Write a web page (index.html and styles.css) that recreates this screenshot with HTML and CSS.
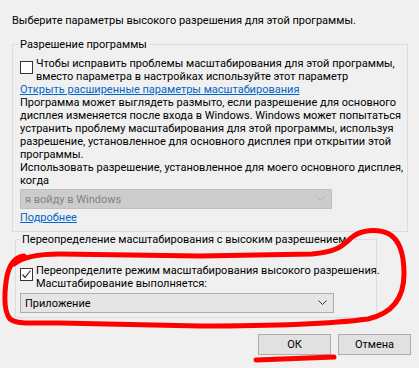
FILE: index.html
```html
<!DOCTYPE html>
<html lang="ru">
<head>
  <meta charset="UTF-8" />
  <meta name="viewport" content="width=device-width, initial-scale=1.0"/>
  <title>Параметры высокого разрешения</title>
  <link rel="stylesheet" href="styles.css">
</head>
<body>
  <div class="dialog">
    <p class="intro">Выберите параметры высокого разрешения для этой программы.</p>

    <fieldset class="group group-app">
      <legend>Разрешение программы</legend>
      <label class="check-row">
        <span class="check"></span>
        <span class="check-text">Чтобы исправить проблемы масштабирования для этой программы,<br>вместо параметра в настройках используйте этот параметр</span>
      </label>
      <a class="link" href="#">Открыть расширенные параметры масштабирования</a>
      <p class="text">Программа может выглядеть размыто, если разрешение для основного<br>дисплея изменяется после входа в Windows. Windows может попытаться<br>устранить проблему масштабирования для этой программы, используя<br>разрешение, установленное для основного дисплея при открытии этой<br>программы.</p>
      <p class="text">Использовать разрешение, установленное для моего основного дисплея,<br>когда</p>
      <div class="combo combo-disabled">
        <span>я войду в Windows</span>
        <svg class="chevron" width="9" height="6" viewBox="0 0 9 6"><polyline points="0.5,0.5 4.5,4.5 8.5,0.5" /></svg>
      </div>
      <a class="link link-more" href="#">Подробнее</a>
    </fieldset>

    <fieldset class="group group-override">
      <legend>Переопределение масштабирования с высоким разрешением</legend>
      <label class="check-row">
        <span class="check">
          <svg width="13" height="13" viewBox="0 0 13 13"><polyline points="2.5,6.5 5,9.5 10.5,2.5" /></svg>
        </span>
        <span class="check-text">Переопределите режим масштабирования высокого разрешения.<br>Масштабирование выполняется:</span>
      </label>
      <div class="combo">
        <span>Приложение</span>
        <svg class="chevron" width="9" height="6" viewBox="0 0 9 6"><polyline points="0.5,0.5 4.5,4.5 8.5,0.5" /></svg>
      </div>
    </fieldset>

    <div class="buttons">
      <button class="btn">ОК</button>
      <button class="btn">Отмена</button>
    </div>

    <!-- красные пометки поверх окна -->
    <svg class="marks" width="419" height="368" viewBox="0 0 419 368">
      <path d="M 24 256 C 14 257, 8 266, 6 282 C 4 298, 4 312, 10 319 C 16 324, 30 323, 60 323 L 200 326 C 260 326, 330 324, 368 319 C 394 313, 404 296, 404 274 C 404 254, 400 240, 389 234 C 377 228, 360 230, 351 238 C 343 246, 336 252, 312 254 L 200 256 L 60 254 C 40 254, 24 256, 14 264" />
      <path d="M 256 360 C 280 359, 310 358, 334 357" />
    </svg>
  </div>
</body>
</html>
```

FILE: styles.css
```css
body {
  margin: 0;
  background-color: #f0f0f0;
  font-family: Roboto, "Noto Sans", sans-serif;
  font-size: 11px;
  line-height: 13px;
  color: #000;
}

.dialog {
  position: relative;
  width: 419px;
  height: 368px;
  padding: 14px 0 0 12px;
  box-sizing: border-box;
}

.intro {
  margin: 0 0 11px 0;
  white-space: nowrap;
}

.group {
  box-sizing: border-box;
  margin: 0;
  border: 1px solid #dcdcdc;
  min-inline-size: 0;
}

.group legend {
  padding: 0 2px;
  white-space: nowrap;
}

.group-app {
  width: 396px;
  padding: 6px 7px 7px 7px;
}

.group-app legend {
  margin-left: -2px;
}

.group-override {
  width: 362px;
  margin: 1px 0 0 3px;
  padding: 18px 4px 4px 4px;
}

.check-row {
  display: flex;
  align-items: flex-start;
  gap: 3px;
}

.check {
  flex: none;
  width: 13px;
  height: 13px;
  margin-top: 4px;
  box-sizing: border-box;
  border: 1px solid #333;
  background-color: #fff;
  position: relative;
}

.check svg {
  position: absolute;
  left: -1px;
  top: -1px;
  fill: none;
  stroke: #333;
  stroke-width: 1.2;
}

.check-text {
  white-space: nowrap;
}

.link {
  display: block;
  color: #0066cc;
  text-decoration: underline;
  white-space: nowrap;
}

.text {
  margin: 0;
  white-space: nowrap;
}

.combo {
  display: flex;
  align-items: center;
  justify-content: space-between;
  box-sizing: border-box;
  width: 314px;
  height: 20px;
  margin-top: 3px;
  padding: 0 6px 0 4px;
  background-color: #e5e5e5;
  border: 1px solid #adadad;
}

.combo-disabled {
  width: 312px;
  margin-top: 2px;
  background-color: #cccccc;
  border-color: #bfbfbf;
  color: #838383;
}

.chevron {
  fill: none;
  stroke: #333;
  stroke-width: 1;
}

.combo-disabled .chevron {
  stroke: #b0b0b0;
}

.link-more {
  margin-top: 2px;
}

.buttons {
  display: flex;
  justify-content: flex-end;
  gap: 7px;
  margin-top: 16px;
  padding-right: 8px;
}

.btn {
  width: 73px;
  height: 21px;
  padding: 0;
  font-family: inherit;
  font-size: 11px;
  color: #000;
  background-color: #e1e1e1;
  border: 1px solid #adadad;
}

.marks {
  position: absolute;
  left: 0;
  top: 0;
  pointer-events: none;
}

.marks path {
  fill: none;
  stroke: #ff0000;
  stroke-width: 5;
  stroke-linecap: round;
  stroke-linejoin: round;
}
```
